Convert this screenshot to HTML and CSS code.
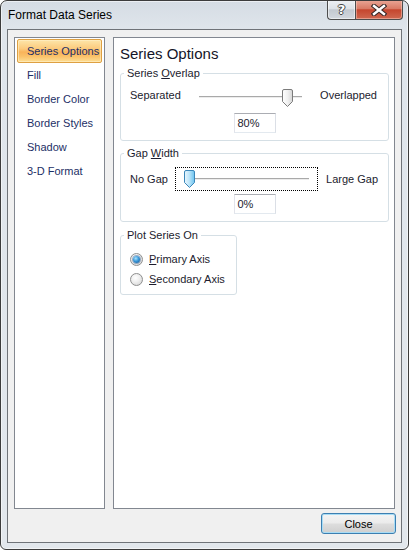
FILE: index.html
```html
<!DOCTYPE html>
<html>
<head>
<meta charset="utf-8">
<link rel="stylesheet" href="styles.css">
</head>
<body>
<div class="window">
  <div class="titlebar">
    <span class="title">Format Data Series</span>
    <div class="caption">
      <div class="cap help"><span class="help-glyph">?</span></div>
      <div class="cap close">
        <svg width="16" height="12" viewBox="0 0 16 12">
          <path d="M3 2 L13 10 M13 2 L3 10" stroke="#3a2a28" stroke-width="4.6" stroke-linecap="square"/>
          <path d="M3 2 L13 10 M13 2 L3 10" stroke="#ffffff" stroke-width="2.4" stroke-linecap="square"/>
        </svg>
      </div>
    </div>
  </div>
  <div class="client">
    <div class="panels">
      <ul class="nav">
        <li class="sel">Series Options</li>
        <li>Fill</li>
        <li>Border Color</li>
        <li>Border Styles</li>
        <li>Shadow</li>
        <li>3-D Format</li>
      </ul>
      <div class="content">
        <h1 class="heading">Series Options</h1>
        <fieldset class="group g1">
          <legend>Series <u>O</u>verlap</legend>
          <div class="slider-row r1">
            <span>Separated</span>
            <div class="slider s1">
              <div class="track"></div>
              <svg class="thumb" style="left:87px" width="11" height="18" viewBox="0 0 11 18">
                <defs><linearGradient id="tg" x1="0" y1="0" x2="1" y2="0"><stop offset="0" stop-color="#ffffff"/><stop offset="0.5" stop-color="#f1f1f1"/><stop offset="1" stop-color="#d6d6d6"/></linearGradient></defs>
                <path d="M2 0.5 H9 A1.5 1.5 0 0 1 10.5 2 V12.5 L5.5 17.5 L0.5 12.5 V2 A1.5 1.5 0 0 1 2 0.5 Z" fill="url(#tg)" stroke="#7b7b7b"/>
              </svg>
            </div>
            <span>Overlapped</span>
          </div>
          <div class="value-box">80%</div>
        </fieldset>
        <fieldset class="group g2">
          <legend>Gap <u>W</u>idth</legend>
          <div class="slider-row r2">
            <span>No Gap</span>
            <div class="slider s2">
              <div class="track"></div>
              <svg class="thumb" style="left:8px" width="11" height="18" viewBox="0 0 11 18">
                <defs><linearGradient id="tb" x1="0" y1="0" x2="1" y2="0"><stop offset="0" stop-color="#e9f6fd"/><stop offset="0.45" stop-color="#bfe6fa"/><stop offset="1" stop-color="#6cc3ee"/></linearGradient></defs>
                <path d="M2 0.5 H9 A1.5 1.5 0 0 1 10.5 2 V12.5 L5.5 17.5 L0.5 12.5 V2 A1.5 1.5 0 0 1 2 0.5 Z" fill="url(#tb)" stroke="#3b86b9"/>
              </svg>
            </div>
            <span>Large Gap</span>
          </div>
          <div class="value-box">0%</div>
        </fieldset>
        <fieldset class="group g3">
          <legend>Plot Series On</legend>
          <div class="radio-row"><span class="radio checked"></span><span><u>P</u>rimary Axis</span></div>
          <div class="radio-row"><span class="radio"></span><span><u>S</u>econdary Axis</span></div>
        </fieldset>
      </div>
    </div>
    <div class="footer">
      <button class="btn">Close</button>
    </div>
  </div>
</div>
</body>
</html>
```

FILE: styles.css
```css
html, body {
  margin: 0;
  padding: 0;
  background: #ffffff;
}

body {
  font-family: "Liberation Sans", Arial, sans-serif;
  font-size: 11px;
  color: #1c1c2e;
}

.window {
  width: 409px;
  height: 550px;
  box-sizing: border-box;
  border: 1px solid #3c3c3c;
  border-radius: 7px 7px 6px 6px;
  background: linear-gradient(180deg, #d5dce4 0px, #dfe5eb 28px, #e2e7ec 100%);
  box-shadow: inset 0 0 0 1px rgba(255, 255, 255, 0.55);
  display: flex;
  flex-direction: column;
  overflow: hidden;
}

.titlebar {
  height: 28px;
  flex: none;
  display: flex;
  justify-content: space-between;
  align-items: flex-start;
  padding-left: 7px;
}

.title {
  font-size: 12px;
  line-height: 28px;
  color: #000000;
}

.caption {
  display: flex;
  margin-top: -1px;
  margin-right: 5px;
}

.cap {
  height: 20px;
  box-sizing: border-box;
  border: 1px solid #4d4d4d;
  border-top: none;
  display: flex;
  align-items: center;
  justify-content: center;
}

.help {
  width: 28px;
  border-right: none;
  border-radius: 0 0 0 4px;
  background: linear-gradient(180deg, #eef1f4 0%, #dde2e7 45%, #c3c9d0 52%, #d3d8de 100%);
  box-shadow: inset 0 0 0 1px rgba(255, 255, 255, 0.5);
}

.help-glyph {
  font-family: "DejaVu Sans", sans-serif;
  font-weight: bold;
  font-size: 13px;
  line-height: 14px;
  color: #ffffff;
  text-shadow: -1px 0 #444, 1px 0 #444, 0 -1px #444, 0 1px #444;
}

.close {
  width: 48px;
  border-radius: 0 0 4px 0;
  background: linear-gradient(180deg, #eaa797 0%, #d97b66 45%, #c5462e 52%, #cf6850 100%);
  box-shadow: inset 0 0 0 1px rgba(255, 220, 210, 0.45);
}

.client {
  flex: 1;
  margin: 0 6px 6px 6px;
  border: 1px solid #6f7378;
  background: #f0f0f0;
  display: flex;
  flex-direction: column;
  padding: 7px 5px 8px 6px;
}

.panels {
  height: 472px;
  display: flex;
  gap: 8px;
}

.nav {
  list-style: none;
  margin: 0;
  padding: 1px 2px 0 2px;
  width: 91px;
  box-sizing: border-box;
  border: 1px solid #828790;
  background: #ffffff;
  color: #1d2f66;
}

.nav li {
  height: 24px;
  line-height: 24px;
  padding-left: 10px;
  box-sizing: border-box;
  white-space: nowrap;
}

.nav li.sel {
  border: 1px solid #dea042;
  border-radius: 2px;
  line-height: 22px;
  padding-left: 9px;
  background: linear-gradient(180deg, #fde6aa 0%, #fcca7c 40%, #f9b35a 55%, #fbc26a 75%, #fddf96 100%);
  box-shadow: inset 0 0 0 1px rgba(255, 240, 200, 0.6);
}

.content {
  width: 282px;
  box-sizing: border-box;
  border: 1px solid #828790;
  background: #ffffff;
  margin-right: 1px;
}

.heading {
  font-size: 15px;
  font-weight: normal;
  line-height: 18px;
  margin: 7px 0 4px 6px;
  color: #141428;
}

.group {
  margin: 0 5px 0 6px;
  padding: 0;
  border: 1px solid #d5dfe5;
  border-radius: 3px;
  min-width: 0;
}

.group legend {
  padding: 0 3px;
  margin-left: 3px;
  line-height: 13px;
  font-size: 11px;
}

.g1 {
  padding: 5px 0 7px 0;
}

.g2 {
  margin-top: 6px;
  padding: 7px 0 7px 0;
}

.g3 {
  margin-top: 7px;
  width: 117px;
  box-sizing: border-box;
  padding: 7px 0 5px 0;
}

.slider-row {
  display: flex;
  justify-content: space-between;
  align-items: center;
}

.r1 {
  height: 20px;
  padding: 0 11px 0 9px;
}

.r2 {
  height: 24px;
  padding: 0 10px 0 9px;
}

.slider {
  position: relative;
  box-sizing: border-box;
}

.s1 {
  width: 110px;
  height: 20px;
}

.s2 {
  width: 143px;
  height: 24px;
  border: 1px dotted #000000;
}

.track {
  position: absolute;
  height: 1px;
  background: #a9a9a9;
  box-shadow: 0 1px 0 #ececec;
}

.s1 .track {
  left: 4px;
  right: 3px;
  top: 11px;
}

.s2 .track {
  left: 9px;
  right: 8px;
  top: 10px;
}

.thumb {
  position: absolute;
  display: block;
}

.s1 .thumb {
  top: 4px;
}

.s2 .thumb {
  top: 2px;
}

.value-box {
  width: 42px;
  height: 20px;
  box-sizing: border-box;
  border: 1px solid #abadb3;
  border-color: #abadb3 #dbdfe6 #e3e9ef #e2e3ea;
  background: #ffffff;
  padding-left: 3px;
  line-height: 18px;
  margin: 8px auto 0 auto;
}

.g2 .value-box {
  margin-top: 3px;
}

.radio-row {
  height: 20px;
  display: flex;
  align-items: center;
  gap: 6px;
  padding-left: 9px;
}

.radio {
  width: 13px;
  height: 13px;
  box-sizing: border-box;
  border-radius: 50%;
  border: 1px solid #8e8f8f;
  background: radial-gradient(circle at 40% 35%, #ffffff 0%, #f0f0f0 40%, #cfcfcf 100%);
  display: flex;
  align-items: center;
  justify-content: center;
}

.radio.checked::after {
  content: "";
  width: 7px;
  height: 7px;
  border-radius: 50%;
  background: radial-gradient(circle at 40% 35%, #a8e4ff 0%, #3b98d8 45%, #0f4e8e 100%);
  box-shadow: 0 0 0 1px rgba(20, 70, 130, 0.4);
}

.footer {
  margin-top: 4px;
  display: flex;
  justify-content: flex-end;
}

.btn {
  width: 75px;
  height: 21px;
  box-sizing: border-box;
  border: 1px solid #3c7fb1;
  border-radius: 3px;
  background: linear-gradient(180deg, #f4f4f4 0%, #ebebeb 48%, #dddddd 52%, #cfcfcf 100%);
  box-shadow: inset 0 0 0 1px #a8dcf5;
  font-family: "Liberation Sans", Arial, sans-serif;
  font-size: 11px;
  color: #000000;
  padding: 0;
}
```
